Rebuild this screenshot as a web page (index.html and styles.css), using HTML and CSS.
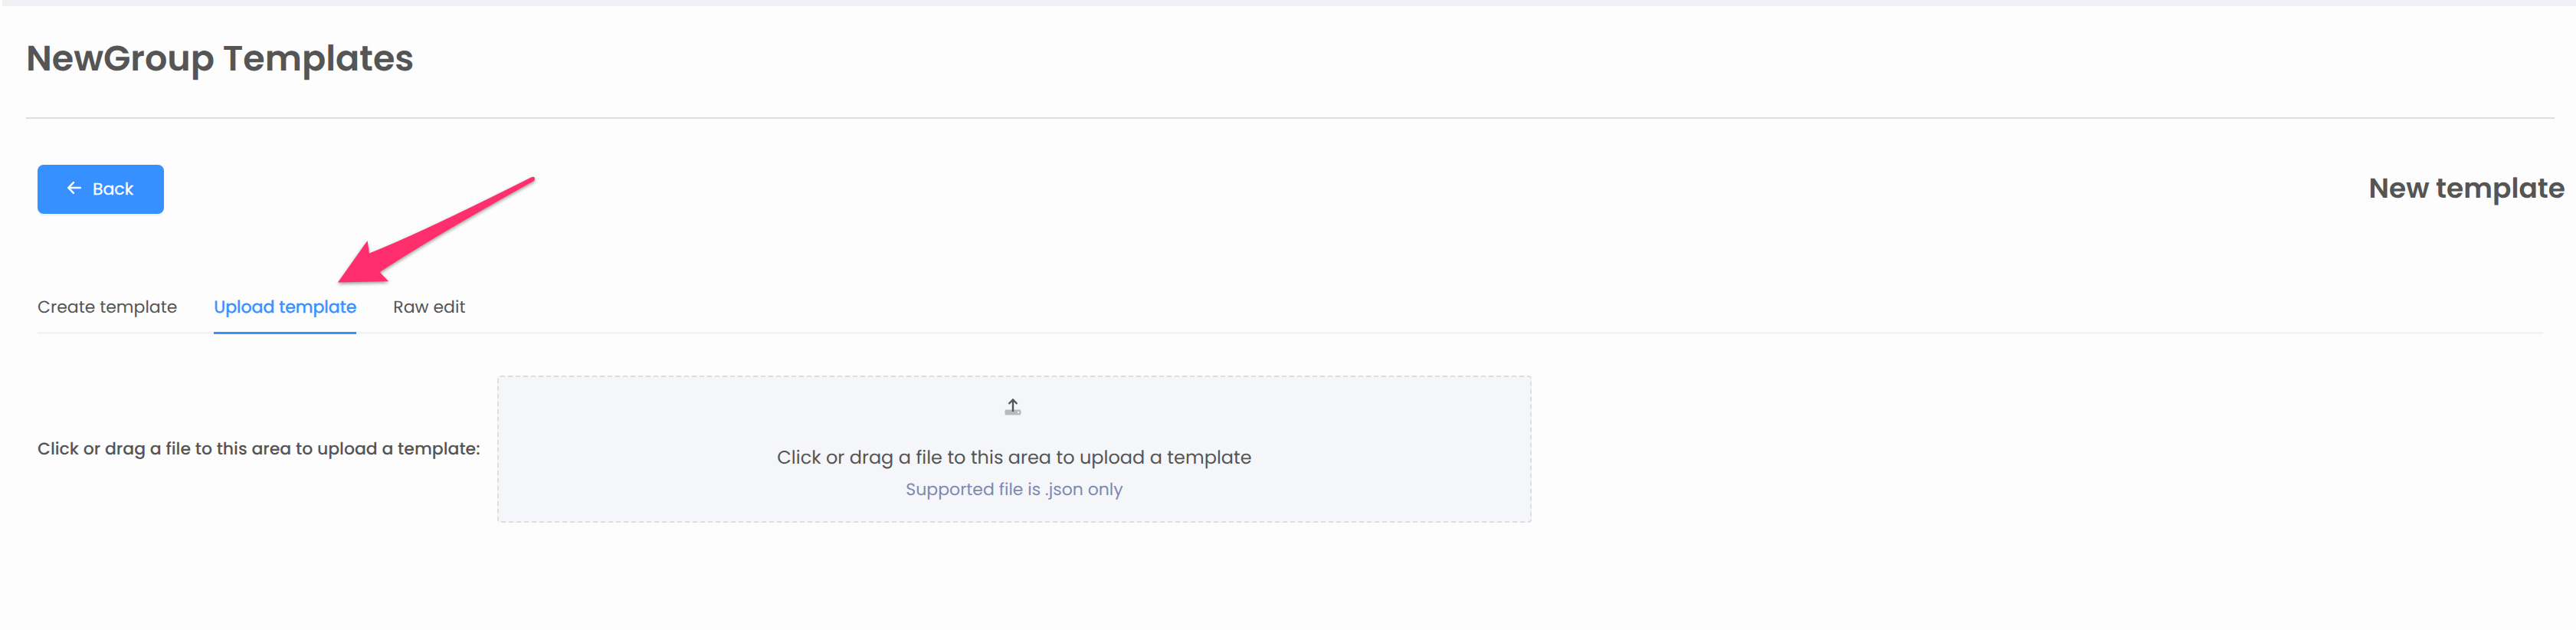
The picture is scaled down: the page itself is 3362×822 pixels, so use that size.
FILE: index.html
```
<!DOCTYPE html>
<html lang="en">
<head>
    <meta charset="utf-8">
    <title>NewGroup Templates</title>
    <link rel="stylesheet" href="styles.css">
</head>
<body>
    <div class="top-strip"></div>
    <header class="page-header">
        <h1 class="page-title">NewGroup Templates</h1>
    </header>

    <div class="toolbar">
        <button class="back-button">
            <svg class="back-icon" viewBox="0 0 18 16" width="18" height="16">
                <path d="M17 8H1.5M8 1.2L1.2 8L8 14.8"/>
            </svg>
            <span class="back-text">Back</span>
        </button>
        <h2 class="sub-title">New template</h2>
    </div>

    <nav class="tabs">
        <a class="tab">Create template</a>
        <a class="tab active">Upload template</a>
        <a class="tab">Raw edit</a>
    </nav>

    <div class="upload-row">
        <label class="upload-label">Click or drag a file to this area to upload a template:</label>
        <div class="upload-area">
            <svg class="upload-icon" viewBox="0 0 22 22" width="22" height="22">
                <rect x="0.5" y="14.5" width="21" height="7" rx="2" fill="#b8b9bb"/>
                <circle cx="18" cy="18" r="1.2" fill="#f4f6fa"/>
                <path d="M11 17V2M5.5 7L11 1.5L16.5 7" fill="none" stroke="#555" stroke-width="2.4"/>
            </svg>
            <p class="upload-text">Click or drag a file to this area to upload a template</p>
            <p class="upload-hint">Supported file is .json only</p>
        </div>
    </div>

    <!-- arrow pointing at the upload tab -->
    <svg class="pointer" viewBox="0 0 270 150" width="270" height="150">
        <path d="M2 148.500L40.500 94L43 110.500Q110 84 255 11Q259 10 259 13Q259 16 256 17Q130 87 56.500 135L68 147Z"/>
    </svg>
</body>
</html>
```
FILE: styles.css
```
* {
    box-sizing: border-box;
}
body {
    margin: 0;
    height: 822px;
    overflow: hidden;
    position: relative;
    background: #fdfdfd;
    color: #555;
    font-family: Poppins, Inter, sans-serif;
    font-size: 22px;
    text-rendering: geometricPrecision;
}
h1, h2, p {
    margin: 0;
}
.top-strip {
    height: 8px;
    margin-left: 3px;
    background: #f0f0f5;
}
.page-header {
    height: 147px;
    margin: 0 28px 0 34px;
    padding-top: 34px;
    border-bottom: 2px solid #dedede;
}
.page-title {
    font-size: 46px;
    line-height: 70px;
    font-weight: 600;
}
.toolbar {
    display: flex;
    justify-content: space-between;
    height: 124px;
    margin-top: 60px;
    padding: 0 14px 0 49px;
}
.back-button {
    display: flex;
    align-items: center;
    width: 165px;
    height: 64px;
    padding: 0 0 0 39px;
    gap: 15px;
    border: none;
    border-radius: 8px;
    background: #3690ff;
    color: #fff;
    font-family: inherit;
    font-size: 22px;
    box-shadow: 0 3px 0 rgba(0, 0, 0, 0.04);
}
.back-icon {
    margin-top: -4px;
    fill: none;
    stroke: #fff;
    stroke-width: 2.4;
    stroke-linecap: round;
    stroke-linejoin: round;
}
.back-text {
    margin-top: -2px;
    -webkit-text-stroke: 0.3px currentColor;
}
.sub-title {
    font-size: 36px;
    line-height: 61px;
    font-weight: 600;
}
.tabs {
    display: flex;
    gap: 48px;
    height: 97px;
    margin: 0 43px 0 49px;
    border-bottom: 3px solid #f3f3f3;
}
.tab {
    height: 97px;
    padding-top: 46px;
    line-height: 32px;
}
.tab.active {
    color: #3690ff;
    -webkit-text-stroke: 0.5px currentColor;
    border-bottom: 3px solid #3690ff;
}
.upload-row {
    display: flex;
    align-items: center;
    margin: 54px 0 0 49px;
}
.upload-label {
    width: 600px;
    padding-bottom: 2px;
    font-weight: 500;
}
.upload-area {
    display: flex;
    flex-direction: column;
    align-items: center;
    width: 1350px;
    height: 192px;
    padding-top: 28px;
    border: 2px dashed #dedede;
    border-radius: 4px;
    background: #f4f6fa;
}
.upload-icon {
    margin-right: 5px;
}
.upload-text {
    margin-top: 36px;
    font-size: 24px;
    line-height: 40px;
}
.upload-hint {
    margin-top: 3px;
    line-height: 36px;
    color: #7e88b0;
}
.pointer {
    position: absolute;
    left: 439px;
    top: 220px;
    fill: #ff2f6d;
    filter: drop-shadow(0 2px 2px rgba(0, 0, 0, 0.4));
}
```
